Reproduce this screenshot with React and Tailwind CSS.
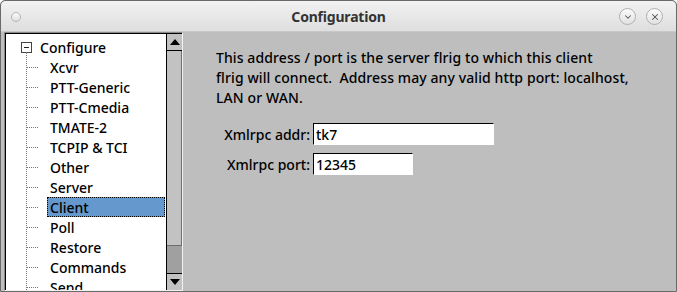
import { ChevronDown, X } from "lucide-react";

const items = [
  "Xcvr",
  "PTT-Generic",
  "PTT-Cmedia",
  "TMATE-2",
  "TCPIP & TCI",
  "Other",
  "Server",
  "Client",
  "Poll",
  "Restore",
  "Commands",
  "Send",
];

function TitleBar() {
  return (
    <div className="relative flex h-[31px] items-center justify-center rounded-t-[5px] border-b border-[#c8c8c8] bg-gradient-to-b from-[#f2f2f2] to-[#dedede]">
      <span className="absolute left-[10px] top-[11px] h-[10px] w-[10px] rounded-full border border-[#b4b4b4] bg-gradient-to-b from-[#fafafa] to-[#e0e0e0]" />
      <span className="text-[14px] font-bold tracking-[-0.2px] text-[#333]">Configuration</span>
      <div className="absolute right-[13px] top-[7px] flex gap-[10px]">
        <span className="flex h-[17px] w-[17px] items-center justify-center rounded-full border border-[#b0b0b0] bg-gradient-to-b from-[#fbfbfb] to-[#e2e2e2]">
          <ChevronDown size={10} strokeWidth={2.5} className="text-[#555]" />
        </span>
        <span className="flex h-[17px] w-[17px] items-center justify-center rounded-full border border-[#b0b0b0] bg-gradient-to-b from-[#fbfbfb] to-[#e2e2e2]">
          <X size={10} strokeWidth={2.5} className="text-[#555]" />
        </span>
      </div>
    </div>
  );
}

function Tree() {
  return (
    <div className="ml-[3px] h-[259px] w-[179px] border border-t-[#8a8a8a] border-l-[#8a8a8a] border-r-[#f2f2f2] border-b-[#f2f2f2]">
      <div className="flex h-full border-t border-l border-black">
        <div className="relative flex-1 overflow-hidden bg-white pt-[3px]">
          {/* vertical connector */}
          <div className="absolute left-[20px] top-[18px] h-[260px] border-l border-dotted border-[#777]" />
          <div className="flex h-[20px] items-center">
            <span className="ml-[15px] flex h-[11px] w-[11px] items-center justify-center border border-[#444] bg-white">
              <span className="h-px w-[5px] bg-[#222]" />
            </span>
            <span className="ml-[8px] text-[14px] font-medium text-black">Configure</span>
          </div>
          {items.map((it) => (
            <div key={it} className="flex h-[20px] items-center">
              <span className="ml-[21px] w-[11px] border-t border-dotted border-[#777]" />
              <span
                className={
                  it === "Client"
                    ? "ml-[9px] flex h-[20px] w-[118px] items-center border border-dotted border-black bg-[#6598cc] pl-[2px] text-[14px] font-medium text-black"
                    : "ml-[12px] text-[14px] font-medium text-black"
                }
              >
                {it}
              </span>
            </div>
          ))}
        </div>
        {/* scrollbar */}
        <div className="flex w-[16px] flex-col border-l border-black bg-[#a0a0a0]">
          <div className="flex h-[17px] items-center justify-center border-b border-black bg-[#c2c2c2]">
            <span className="h-0 w-0 border-x-[5px] border-b-[6px] border-x-transparent border-b-black" />
          </div>
          <div className="h-[195px] border-b border-r border-[#6e6e6e] bg-[#c2c2c2]" />
          <div className="flex-1" />
          <div className="flex h-[17px] items-center justify-center border-t border-black bg-[#c2c2c2]">
            <span className="h-0 w-0 border-x-[5px] border-t-[6px] border-x-transparent border-t-black" />
          </div>
        </div>
      </div>
    </div>
  );
}

function Field({ label, value, width }) {
  return (
    <div className="flex h-[22px] items-center">
      <span className="w-[91px] whitespace-nowrap pr-[2px] text-right text-[14px] font-medium text-black">{label}</span>
      <div className={`${width} ml-[1px] flex h-[22px] items-center border border-t-black border-l-black border-r-white border-b-white bg-white pl-[2px] text-[14px] font-medium text-black`}>
        {value}
      </div>
    </div>
  );
}

export default function App() {
  return (
    <div
      className="flex h-[292px] w-[677px] flex-col overflow-hidden rounded-t-[5px] border border-[#6a6a6a] bg-[#bebebe]"
      style={{ fontFamily: "'Noto Sans', sans-serif" }}
    >
      <TitleBar />
      <div className="flex flex-1">
        <Tree />
        <div className="flex flex-col pl-[33px] pt-[16px]">
          <p className="w-[440px] text-[14px] font-medium leading-[20px] tracking-[0.1px] text-black">
            This address / port is the server flrig to which this client
            <br />
            flrig will connect.&nbsp; Address may any valid http port: localhost,
            <br />
            LAN or WAN.
          </p>
          <div className="ml-[5px] mt-[15px] flex flex-col gap-[8px]">
            <Field label="Xmlrpc addr:" value="tk7" width="w-[181px]" />
            <Field label="Xmlrpc port:" value="12345" width="w-[100px]" />
          </div>
        </div>
      </div>
    </div>
  );
}
